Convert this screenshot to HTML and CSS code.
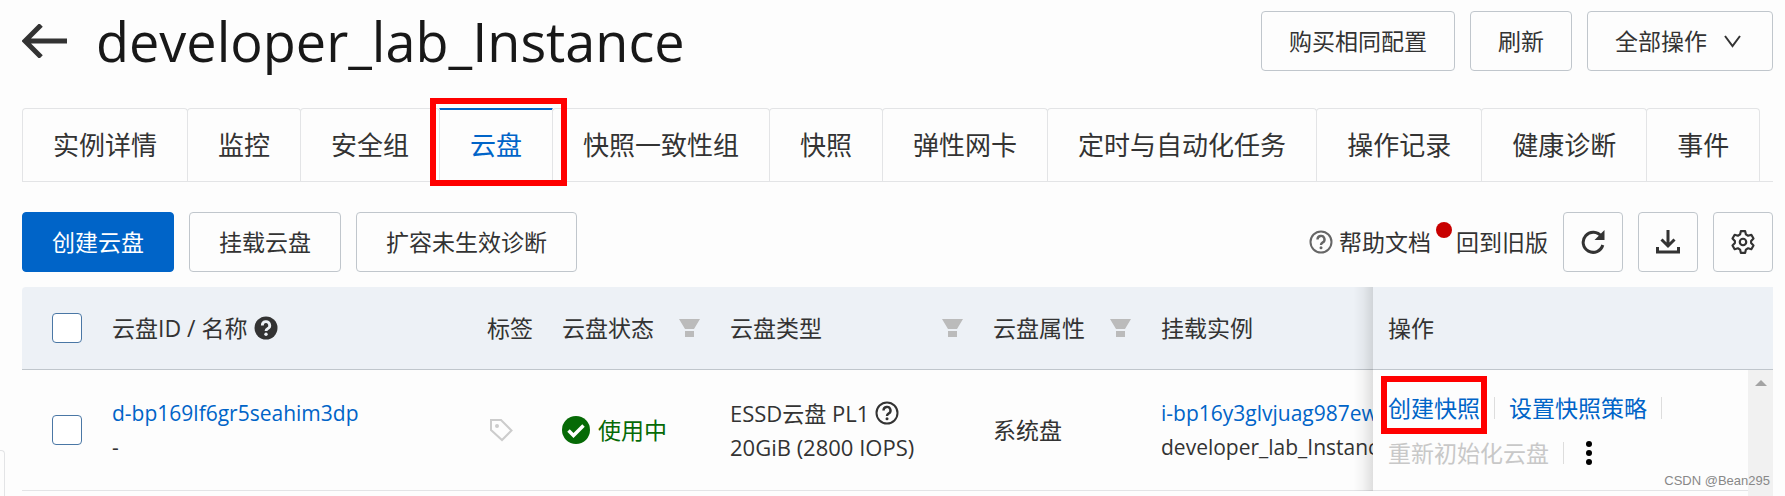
FILE: index.html
```html
<!DOCTYPE html>
<html lang="zh-CN">
<head>
	<meta charset="utf-8">
	<title>developer_lab_Instance</title>
	<link rel="stylesheet" href="styles.css">
</head>
<body>
	<header class="header">
		<a class="back" href="#" aria-label="返回">
			<svg width="46" height="34" viewBox="0 0 46 34"><path d="M19 1 3 17l16 16M3 17h42" fill="none" stroke="#333" stroke-width="5"/></svg>
		</a>
		<h1>developer_lab_Instance</h1>
		<div class="header-actions">
			<button class="btn">购买相同配置</button>
			<button class="btn">刷新</button>
			<button class="btn">全部操作
				<svg class="arrow" width="17" height="13" viewBox="0 0 17 13"><path d="M1 1l7.500 10L16 1" fill="none" stroke="#333" stroke-width="2"/></svg>
			</button>
		</div>
	</header>

	<nav class="tabs">
		<a href="#">实例详情</a>
		<a href="#">监控</a>
		<a href="#">安全组</a>
		<a href="#" class="active">云盘<span class="mark mark-tab"></span></a>
		<a href="#">快照一致性组</a>
		<a href="#">快照</a>
		<a href="#">弹性网卡</a>
		<a href="#">定时与自动化任务</a>
		<a href="#">操作记录</a>
		<a href="#">健康诊断</a>
		<a href="#">事件</a>
	</nav>

	<div class="toolbar">
		<button class="btn primary">创建云盘</button>
		<button class="btn">挂载云盘</button>
		<button class="btn">扩容未生效诊断</button>
		<div class="tools">
			<a class="help" href="#">
				<svg width="24" height="24" viewBox="0 0 24 24"><circle cx="12" cy="12" r="10.500" fill="none" stroke="#666" stroke-width="2"/><path d="M8.500 9.500a3.500 3.500 0 1 1 5 3.100c-1 .6-1.500 1.100-1.500 2.400" fill="none" stroke="#666" stroke-width="2.400"/><circle cx="12" cy="17.800" r="1.500" fill="#666"/></svg>
				帮助文档<span class="dot"></span>
			</a>
			<a class="old" href="#">回到旧版</a>
			<button class="btn icon" aria-label="刷新">
				<svg width="26" height="26" viewBox="0 0 26 26"><path d="M21.300 7.500A10 10 0 1 0 22.800 16" fill="none" stroke="#333" stroke-width="3"/><path d="M24.500 1v10h-10z" fill="#333"/></svg>
			</button>
			<button class="btn icon" aria-label="下载">
				<svg width="26" height="26" viewBox="0 0 26 26"><path d="M13 1v15M6.500 10.500l6.500 6.500 6.500-6.500M2.500 18v5h21v-5" fill="none" stroke="#333" stroke-width="3"/></svg>
			</button>
			<button class="btn icon" aria-label="设置">
				<svg width="26" height="26" viewBox="0 0 24 24"><path d="M10 2h4l.7 3 2 1.200 3-.9 2 3.400L19.500 11v2l2.200 2.300-2 3.400-3-.9-2 1.200-.7 3h-4l-.7-3-2-1.200-3 .9-2-3.400L4.500 13v-2L2.300 8.700l2-3.400 3 .9 2-1.200z" fill="none" stroke="#333" stroke-width="2" stroke-linejoin="round"/><circle cx="12" cy="12" r="3" fill="none" stroke="#333" stroke-width="2"/></svg>
			</button>
		</div>
	</div>

	<div class="table-wrap">
		<table>
			<colgroup>
				<col class="c-check">
				<col class="c-id">
				<col class="c-tag">
				<col class="c-status">
				<col class="c-type">
				<col class="c-attr">
				<col>
				<col class="c-ops">
			</colgroup>
			<thead>
				<tr>
					<th class="check"><input type="checkbox" aria-label="全选"></th>
					<th>
						<div class="line">云盘ID / 名称
							<svg width="24" height="24" viewBox="0 0 24 24"><circle cx="12" cy="12" r="11.500" fill="#333"/><path d="M8.300 9.500a3.700 3.700 0 1 1 5.300 3.200c-1.100.6-1.600 1.100-1.600 2.300" fill="none" stroke="#edf1f6" stroke-width="2.800"/><circle cx="12" cy="18.200" r="1.700" fill="#edf1f6"/></svg>
						</div>
					</th>
					<th>标签</th>
					<th>
						<div class="filter">云盘状态
							<svg width="21" height="18" viewBox="0 0 21 18"><path d="M0 0h21l-6 10H6zM6 12h9v6H6z" fill="#bbb"/></svg>
						</div>
					</th>
					<th>
						<div class="filter">云盘类型
							<svg width="21" height="18" viewBox="0 0 21 18"><path d="M0 0h21l-6 10H6zM6 12h9v6H6z" fill="#bbb"/></svg>
						</div>
					</th>
					<th>
						<div class="filter">云盘属性
							<svg width="21" height="18" viewBox="0 0 21 18"><path d="M0 0h21l-6 10H6zM6 12h9v6H6z" fill="#bbb"/></svg>
						</div>
					</th>
					<th>挂载实例</th>
					<th class="ops">操作</th>
				</tr>
			</thead>
			<tbody>
				<tr>
					<td class="check"><input type="checkbox" aria-label="选择云盘"></td>
					<td class="name"><a href="#">d-bp169lf6gr5seahim3dp</a><br>-</td>
					<td>
						<svg class="tag" width="24" height="24" viewBox="0 0 24 24"><path d="M2 2h10l10.500 10.500-9.500 9.500L2 12z" fill="none" stroke="#ccc" stroke-width="2"/><circle cx="8" cy="8" r="2" fill="#ccc"/></svg>
					</td>
					<td>
						<div class="line running">
							<svg width="28" height="28" viewBox="0 0 28 28"><circle cx="14" cy="14" r="14" fill="#066a06"/><path d="M6.500 14.500l5 5 10-10" fill="none" stroke="#fff" stroke-width="3.500"/></svg>
							使用中
						</div>
					</td>
					<td class="type">
						<div class="line">ESSD云盘 PL1
							<svg width="24" height="24" viewBox="0 0 24 24"><circle cx="12" cy="12" r="10.500" fill="none" stroke="#333" stroke-width="2"/><path d="M8.500 9.500a3.500 3.500 0 1 1 5 3.100c-1 .6-1.500 1.100-1.500 2.400" fill="none" stroke="#333" stroke-width="2.400"/><circle cx="12" cy="17.800" r="1.500" fill="#333"/></svg>
						</div>
						20GiB (2800 IOPS)
					</td>
					<td>系统盘</td>
					<td class="instance"><a href="#">i-bp16y3glvjuag987ew</a><br>developer_lab_Instance</td>
					<td class="ops">
						<div class="op-row">
							<a href="#" class="create">创建快照<span class="mark mark-op"></span></a>
							<i class="sep"></i>
							<a href="#">设置快照策略</a>
							<i class="sep"></i>
						</div>
						<div class="op-row">
							<button class="link" disabled>重新初始化云盘</button>
							<i class="sep"></i>
							<button class="more" aria-label="更多">
								<svg width="6" height="24" viewBox="0 0 6 24"><circle cx="3" cy="3" r="3"/><circle cx="3" cy="12" r="3"/><circle cx="3" cy="21" r="3"/></svg>
							</button>
						</div>
					</td>
				</tr>
			</tbody>
		</table>
		<div class="scrollbar"></div>
	</div>

	<div class="side-handle"></div>
	<span class="watermark">CSDN @Bean295</span>
</body>
</html>
```

FILE: styles.css
```css
* {
  box-sizing: border-box;
}

body {
  margin: 0;
  height: 100vh;
  padding: 11px 12px 0 22px;
  display: flex;
  flex-direction: column;
  position: relative;
  overflow: hidden;
  background: #fdfdfd;
  color: #333;
  font-family: "Open Sans", "Noto Sans CJK SC", sans-serif;
  font-size: 23px;
  line-height: 34px;
}

a {
  color: #0064c8;
  text-decoration: none;
}

svg {
  display: block;
  flex: none;
}

button {
  font: inherit;
  color: inherit;
  cursor: pointer;
}

/* header */
.header {
  display: flex;
  align-items: center;
  height: 60px;
}

h1 {
  margin: 0 0 0 28px;
  color: #181818;
  font-size: 54px;
  font-weight: 400;
  line-height: 60px;
}

.header-actions {
  display: flex;
  gap: 15px;
  margin-left: auto;
}

.btn {
  display: flex;
  align-items: center;
  justify-content: center;
  height: 60px;
  padding: 0 27px;
  border: 1px solid #c0c6cc;
  border-radius: 4px;
  background: #fdfdfd;
  white-space: nowrap;
}

.arrow {
  margin: 0 4px 0 17px;
}

/* tabs */
.tabs {
  display: flex;
  height: 74px;
  margin-top: 37px;
  border-bottom: 1px solid #e3e4e6;
  font-size: 26px;
}

.tabs a {
  display: flex;
  align-items: center;
  position: relative;
  margin-right: -1px;
  padding: 0 30px;
  border: 1px solid #e3e4e6;
  border-bottom: 0;
  border-radius: 4px 4px 0 0;
  color: #333;
  white-space: nowrap;
}

.tabs .active {
  border-top-color: #0064c8;
  border-radius: 0;
  box-shadow: inset 0 1px #0064c8;
  color: #0064c8;
}

.mark {
  position: absolute;
  border: 6px solid #f00;
  z-index: 2;
  pointer-events: none;
}

.mark-tab {
  inset: -11px -15px -5px -10px;
}

/* toolbar */
.toolbar {
  display: flex;
  gap: 15px;
  margin-top: 30px;
}

.toolbar .btn {
  padding: 0 29px;
}

.toolbar .primary {
  border-color: #0064c8;
  background: #0064c8;
  color: #fff;
}

.tools {
  display: flex;
  align-items: center;
  gap: 15px;
  margin-left: auto;
}

.tools a {
  color: #333;
}

.help {
  display: flex;
  align-items: center;
  gap: 6px;
  position: relative;
}

.help + .old {
  margin-left: 4px;
}

.dot {
  position: absolute;
  top: -3px;
  right: -15px;
  width: 16px;
  height: 16px;
  border-radius: 50%;
  background: #c80000;
}

.toolbar .icon {
  width: 60px;
  padding: 0;
}

/* disk table */
.table-wrap {
  flex: 1;
  position: relative;
  margin-top: 15px;
}

table {
  width: 100%;
  table-layout: fixed;
  border-collapse: separate;
  border-spacing: 0;
}

.c-check { width: 75px; }
.c-id { width: 375px; }
.c-tag { width: 75px; }
.c-status { width: 168px; }
.c-type { width: 263px; }
.c-attr { width: 168px; }
.c-ops { width: 400px; }

th,
td {
  padding: 0 15px;
  text-align: left;
  font-weight: 400;
  white-space: nowrap;
}

th {
  height: 83px;
  background: #edf1f6;
  border-bottom: 1px solid #c0c6cc;
}

td {
  height: 121px;
  border-bottom: 1px solid #e3e4e6;
}

th:first-child {
  border-top-left-radius: 4px;
}

.check {
  padding: 0 0 0 30px;
}

.check input {
  appearance: none;
  display: block;
  width: 30px;
  height: 30px;
  margin: 0;
  border: 1px solid #4a77a5;
  border-radius: 4px;
  background: #fff;
}

.line {
  display: flex;
  align-items: center;
  gap: 6px;
}

.filter {
  display: flex;
  align-items: center;
  justify-content: space-between;
}

.tag {
  margin-left: 2px;
}

.running {
  gap: 8px;
  color: #066a06;
}

.name,
.type,
.instance {
  font-size: 22px;
}

.name,
.instance {
  font-size: 21px;
}

.instance {
  overflow: hidden;
}

.ops {
  position: relative;
}

.ops::before {
  content: "";
  position: absolute;
  top: 0;
  bottom: -1px;
  left: -20px;
  width: 20px;
  background: linear-gradient(to left, rgba(0, 0, 0, 0.12), rgba(0, 0, 0, 0.04) 50%, rgba(0, 0, 0, 0));
}

td.ops {
  background: #fdfdfd;
}

.op-row {
  display: flex;
  align-items: center;
  gap: 14px;
  height: 45px;
}

.create {
  position: relative;
}

.mark-op {
  inset: -15px -7px -9px;
}

.sep {
  width: 1px;
  height: 22px;
  background: #ddd;
}

.link,
.more {
  padding: 0;
  border: 0;
  background: none;
}

.link:disabled {
  color: #c8c8c8;
}

.more {
  margin-left: 8px;
}

.scrollbar {
  position: absolute;
  top: 83px;
  right: 0;
  bottom: 0;
  width: 25px;
  background: #f1f1f1;
}

.scrollbar::before {
  content: "";
  position: absolute;
  top: 10px;
  left: 7px;
  border: 6px solid transparent;
  border-top: 0;
  border-bottom-color: #a3a3a3;
}

.side-handle {
  position: absolute;
  bottom: 0;
  left: 0;
  width: 5px;
  height: 46px;
  border: 1px solid #e3e4e6;
  border-width: 1px 1px 0 0;
  border-top-right-radius: 4px;
}

.watermark {
  position: absolute;
  right: 15px;
  bottom: 5px;
  color: #888;
  font-family: "Liberation Sans", sans-serif;
  font-size: 13px;
  line-height: 20px;
}
```
